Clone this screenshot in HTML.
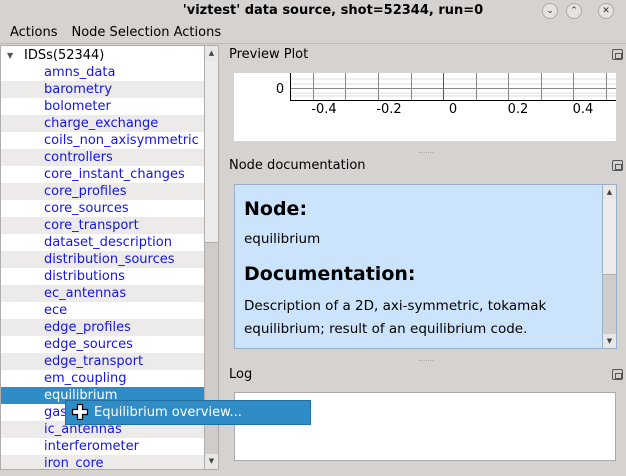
<!DOCTYPE html>
<html><head><style>
*{margin:0;padding:0;box-sizing:border-box}
body{width:626px;height:476px;background:#d6d2d0;font-family:"DejaVu Sans",sans-serif;font-size:13px;position:relative;overflow:hidden;color:#000}
.abs{position:absolute}
#title{left:0;top:0;width:626px;height:22px;background:#d6d2d0;text-align:center;font-weight:bold;font-size:13px;line-height:22px;padding-left:40px}
#menu{left:0;top:22px;width:626px;height:22px;line-height:22px;border-bottom:1px solid #bdb9b6}
#menu span{margin-left:10px;margin-right:4px}
#tree{left:0;top:45px;width:204px;height:425px;background:#fff;border:1px solid #b0aca9;border-right:none;overflow:hidden;padding-top:1px}
.row{height:17px;line-height:17px;padding-left:43px;color:#1515e6;white-space:nowrap}
.row:nth-child(odd){background:#edebe9}
.row:nth-child(even){background:#fff}
.sel{background:#308cc6 !important;color:#fff !important}
#vsb{left:204px;top:45px;width:15px;height:425px;background:#d0ccc9;border:1px solid #b0aca9}
.fl{width:11px;height:11px;border:1px solid #555;border-radius:2px}
.fl::after{content:"";position:absolute;left:2px;top:3px;width:5px;height:4px;border:1px solid #555}
.btn{width:16px;height:16px;border-radius:50%;border:1px solid #aaa;background:#e6e3e1;font-size:9px;text-align:center;line-height:14px;color:#333}
.dp{font-family:'DejaVu Sans',sans-serif}
</style></head><body>
<div id="title" class="abs">'viztest' data source, shot=52344, run=0</div>
<div class="abs btn" style="left:542px;top:3px">&#8964;</div>
<div class="abs btn" style="left:566px;top:3px">&#8963;</div>
<div class="abs btn" style="left:598px;top:3px">✕</div>
<div id="menu" class="abs"><span>Actions</span><span>Node Selection Actions</span></div>
<div id="tree" class="abs">
<div class="row" style="background:#fff;color:#000;padding-left:23px;position:relative"><span style="position:absolute;left:6px;top:0;font-size:8px;color:#555">▼</span>IDSs(52344)</div>
<div class="row">amns_data</div><div class="row">barometry</div><div class="row">bolometer</div><div class="row">charge_exchange</div><div class="row">coils_non_axisymmetric</div><div class="row">controllers</div><div class="row">core_instant_changes</div><div class="row">core_profiles</div><div class="row">core_sources</div><div class="row">core_transport</div><div class="row">dataset_description</div><div class="row">distribution_sources</div><div class="row">distributions</div><div class="row">ec_antennas</div><div class="row">ece</div><div class="row">edge_profiles</div><div class="row">edge_sources</div><div class="row">edge_transport</div><div class="row">em_coupling</div><div class="row sel">equilibrium</div><div class="row">gas_injection</div><div class="row">ic_antennas</div><div class="row">interferometer</div><div class="row">iron_core</div>
</div>
<div id="vsb" class="abs">
<div class="abs" style="left:0;top:0;width:13px;height:15px;background:#e9e7e5;font-size:7px;text-align:center;line-height:15px;color:#444">▲</div>
<div class="abs" style="left:0;top:15px;width:13px;height:182px;background:#eeecea;border-bottom:1px solid #b0aca9"></div>
<div class="abs" style="left:0;top:408px;width:13px;height:15px;background:#e9e7e5;font-size:7px;text-align:center;line-height:15px;color:#444">▼</div>
</div>

<div class="abs" style="left:229px;top:47px">Preview Plot</div>
<div class="abs fl" style="left:612px;top:49px"></div>
<div class="abs" style="left:234px;top:73px;width:382px;height:68px;background:#fff">
<svg width="382" height="68" style="position:absolute;left:0;top:0">
<g stroke="#ddd" stroke-width="1">
<line x1="57" y1="6" x2="382" y2="6"/><line x1="57" y1="11" x2="382" y2="11"/><line x1="57" y1="20" x2="382" y2="20"/>
<line x1="57" y1="23" x2="382" y2="23"/>
</g>
<g stroke="#888" stroke-width="1">
<line x1="56.5" y1="15.5" x2="382" y2="15.5"/>
<line x1="79.5" y1="0" x2="79.5" y2="27"/><line x1="111.5" y1="0" x2="111.5" y2="27"/><line x1="144.5" y1="0" x2="144.5" y2="27"/><line x1="177.5" y1="0" x2="177.5" y2="27"/><line x1="209.5" y1="0" x2="209.5" y2="27"/><line x1="242.5" y1="0" x2="242.5" y2="27"/><line x1="274.5" y1="0" x2="274.5" y2="27"/><line x1="307.5" y1="0" x2="307.5" y2="27"/><line x1="339.5" y1="0" x2="339.5" y2="27"/><line x1="372.5" y1="0" x2="372.5" y2="27"/>
</g>
<line x1="209.5" y1="0" x2="209.5" y2="27" stroke="#555"/>
<line x1="56.5" y1="0" x2="56.5" y2="28" stroke="#000"/>
<line x1="56" y1="27.5" x2="382" y2="27.5" stroke="#000"/>
<g font-family="DejaVu Sans" font-size="13" fill="#000" text-anchor="middle">
<text x="46" y="20">0</text>
<text x="90" y="40">-0.4</text><text x="155" y="40">-0.2</text><text x="219" y="40">0</text><text x="284" y="40">0.2</text><text x="349" y="40">0.4</text>
</g></svg></div>
<div class="abs" style="left:419px;top:152px;width:14px;border-top:1px dotted #aaa"></div>

<div class="abs" style="left:229px;top:158px">Node documentation</div>
<div class="abs fl" style="left:612px;top:160px"></div>
<div class="abs dp" style="left:234px;top:184px;width:383px;height:165px;background:#cce4fb;border:1px solid #98b0c8;padding-left:9px">
<div style="font-weight:bold;font-size:19px;line-height:22px;margin-top:13px">Node:</div>
<div style="font-size:13.5px;line-height:18px;margin-top:10px">equilibrium</div>
<div style="font-weight:bold;font-size:19px;line-height:22px;margin-top:15px">Documentation:</div>
<div style="font-size:13.5px;margin-top:10px;line-height:23px;width:340px">Description of a 2D, axi-symmetric, tokamak equilibrium; result of an equilibrium code.</div>
<div class="abs" style="left:367px;top:0;width:14px;height:163px;background:#d0ccc9;border-left:1px solid #98b0c8">
<div style="height:14px;background:#e9e7e5;font-size:7px;text-align:center;line-height:14px;color:#444">▲</div>
<div style="height:76px;background:#eeecea;border-bottom:1px solid #b0aca9"></div>
<div class="abs" style="top:149px;left:0;width:13px;height:14px;background:#e9e7e5;font-size:7px;text-align:center;line-height:14px;color:#444">▼</div>
</div></div>
<div class="abs" style="left:419px;top:360px;width:14px;border-top:1px dotted #aaa"></div>

<div class="abs" style="left:229px;top:367px">Log</div>
<div class="abs fl" style="left:612px;top:369px"></div>
<div class="abs" style="left:234px;top:392px;width:382px;height:69px;background:#fff;border:1px solid #aaa"></div>
<div class="abs" style="left:0;top:470px;width:626px;height:6px;background:#d6d2d0"></div>

<div class="abs" style="left:65px;top:400px;width:246px;height:25px;background:#308cc6;border:1px solid #1f6fa0;color:#fff;line-height:23px;padding-left:28px;z-index:10">Equilibrium overview...</div>
<svg class="abs" style="left:71px;top:403px;z-index:11" width="18" height="18"><path d="M6.5 1.5h5v5h5v5h-5v5h-5v-5h-5v-5h5z" fill="#fff" stroke="#000" stroke-width="1.2"/></svg>
</body></html>
